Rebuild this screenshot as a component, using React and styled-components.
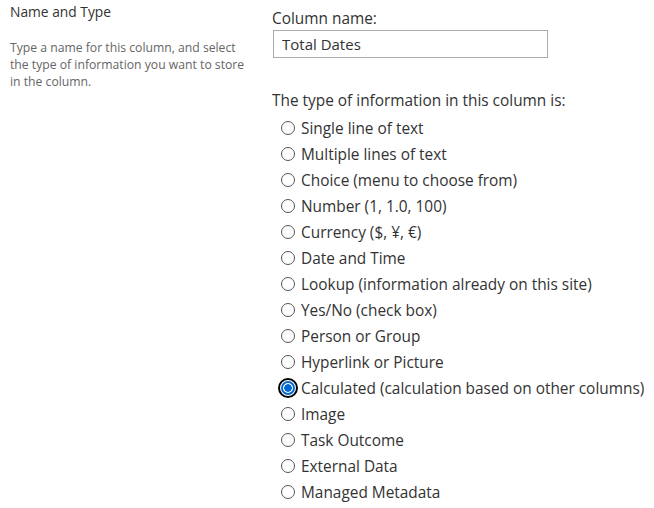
import React from 'react'
import styled, { createGlobalStyle } from 'styled-components'

const GlobalStyle = createGlobalStyle`
    body {
        margin: 0;
        background: #ffffff;
        font-family: "Open Sans", "Noto Sans", sans-serif;
        color: #333333;
    }
`

const Section = styled.div`
    display: grid;
    grid-template-columns: 272px 1fr;
    width: 654px;
    height: 508px;
`

const SideInfo = styled.div`
    padding: 2px 10px 0 10px;
`

const SideTitle = styled.div`
    font-size: 13.8px;
    line-height: 20px;
    color: #333333;
`

const SideText = styled.div`
    width: 244px;
    margin-top: 17px;
    font-size: 12.2px;
    line-height: 17px;
    color: #666666;
`

const Fields = styled.div`
    display: flex;
    flex-direction: column;
    padding-top: 8px;
`

const FieldLabel = styled.div`
    font-size: 15.4px;
    line-height: 22px;
    color: #333333;
`

const TextInput = styled.input`
    box-sizing: border-box;
    width: 275px;
    height: 28px;
    margin: 0 0 0 1px;
    padding: 0 8px;
    border: 1px solid #ababab;
    font-family: inherit;
    font-size: 15px;
    color: #333333;
    outline: none;
`

const TypeLabel = styled(FieldLabel)`
    margin-top: 32px;
`

const OptionList = styled.div`
    display: flex;
    flex-direction: column;
    margin-top: 3px;
    padding-left: 8px;
`

const Option = styled.label`
    display: flex;
    align-items: center;
    height: 26px;
    font-size: 15.4px;
    color: #333333;
    cursor: pointer;
`

const Radio = styled.input`
    appearance: none;
    box-sizing: border-box;
    width: 14px;
    height: 14px;
    margin: 0 6px 0 1px;
    border-radius: 50%;
    border: 1px solid #555555;
    background: #ffffff;

    &:checked {
        border: 2px solid #0067d6;
        background: radial-gradient(circle, #0067d6 0 3.5px, #ffffff 4px);
        outline: 2.5px solid #000000;
        outline-offset: 1px;
        box-shadow: 0 0 0 1px #ffffff;
    }
`

const types = [
    'Single line of text',
    'Multiple lines of text',
    'Choice (menu to choose from)',
    'Number (1, 1.0, 100)',
    'Currency ($, ¥, €)',
    'Date and Time',
    'Lookup (information already on this site)',
    'Yes/No (check box)',
    'Person or Group',
    'Hyperlink or Picture',
    'Calculated (calculation based on other columns)',
    'Image',
    'Task Outcome',
    'External Data',
    'Managed Metadata',
]

export default function App() {
    const [selected, setSelected] = React.useState('Calculated (calculation based on other columns)')
    const [name, setName] = React.useState('Total Dates')

    return (
        <Section>
            <GlobalStyle />
            <SideInfo>
                <SideTitle>Name and Type</SideTitle>
                <SideText>
                    Type a name for this column, and select the type of information you want to store in the column.
                </SideText>
            </SideInfo>

            <Fields>
                <FieldLabel>Column name:</FieldLabel>
                <TextInput value={name} onChange={e => setName(e.target.value)} />

                <TypeLabel>The type of information in this column is:</TypeLabel>
                <OptionList>
                    {types.map(t => (
                        <Option key={t}>
                            <Radio
                                type="radio"
                                name="fieldType"
                                checked={selected === t}
                                onChange={() => setSelected(t)}
                            />
                            {t}
                        </Option>
                    ))}
                </OptionList>
            </Fields>
        </Section>
    )
}
